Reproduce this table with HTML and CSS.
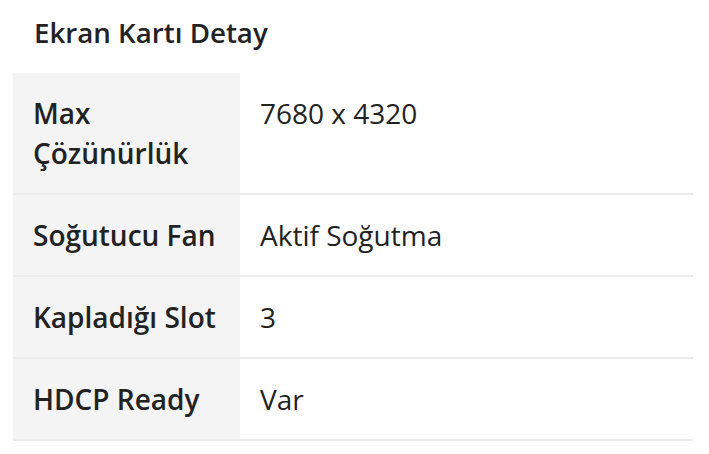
FILE: index.html
```html
<!DOCTYPE html>
<html lang="tr">
<head>
  <meta charset="UTF-8" />
  <meta name="viewport" content="width=device-width, initial-scale=1.0">
  <title>Ekran Kartı Detay</title>
  <link rel="stylesheet" href="styles.css">
</head>
<body>
  <div class="container">
    <h2 class="title">Ekran Kartı Detay</h2>

    <!-- Spec table -->
    <table class="specs">
      <tr>
        <th>Max Çözünürlük</th>
        <td>7680 x 4320</td>
      </tr>
      <tr>
        <th>Soğutucu Fan</th>
        <td>Aktif Soğutma</td>
      </tr>
      <tr>
        <th>Kapladığı Slot</th>
        <td>3</td>
      </tr>
      <tr>
        <th>HDCP Ready</th>
        <td>Var</td>
      </tr>
    </table>
  </div>
</body>
</html>
```

FILE: styles.css
```css
body {
  font-family: 'Open Sans', sans-serif;
  background-color: #ffffff;
  margin: 0;
  padding: 0;
  color: #222;
}
.container {
  width: 680px;
  padding: 12px 0 0 13px;
}
.title {
  margin: 0 0 21px;
  padding-left: 21px;
  font-size: 27.7px;
  line-height: 40px;
  font-weight: 600;
  color: #222;
}
.specs {
  width: 680px;
  border-collapse: collapse;
}
.specs th, .specs td {
  padding: 20px 20px;
  font-size: 28px;
  line-height: 40px;
  text-align: left;
  vertical-align: top;
  border-bottom: 2px solid #ececec;
}
.specs th {
  width: 187px;
  font-weight: 600;
  background-color: #f4f4f4;
}
.specs td {
  font-weight: 400;
}
```
